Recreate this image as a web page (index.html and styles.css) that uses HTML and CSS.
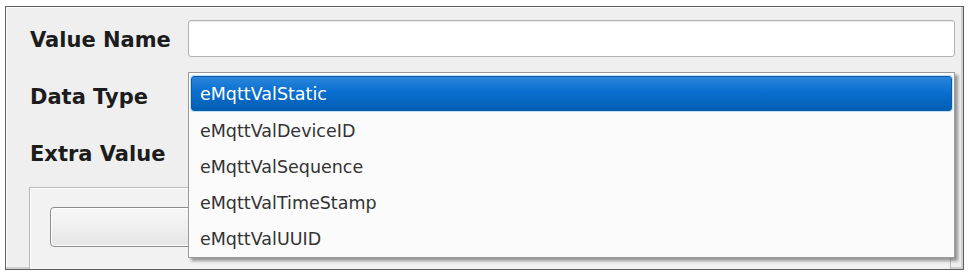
FILE: index.html
```html
<!DOCTYPE html>
<html>
<head>
<meta charset="utf-8">
<link rel="stylesheet" href="styles.css">
</head>
<body>
<div class="frame">
  <div class="row row-name">
    <div class="label">Value Name</div>
    <div class="input"></div>
  </div>
  <div class="row row-type">
    <div class="label">Data Type</div>
    <div class="combo"></div>
  </div>
  <div class="row row-extra">
    <div class="label">Extra Value</div>
  </div>
  <div class="group">
    <div class="button"></div>
  </div>
  <ul class="dropdown">
    <li class="item selected">eMqttValStatic</li>
    <li class="item">eMqttValDeviceID</li>
    <li class="item">eMqttValSequence</li>
    <li class="item">eMqttValTimeStamp</li>
    <li class="item">eMqttValUUID</li>
  </ul>
</div>
</body>
</html>
```
FILE: styles.css
```css
html, body {
  margin: 0;
  padding: 0;
  background: #ffffff;
}
body {
  width: 971px;
  height: 276px;
  overflow: hidden;
  font-family: "DejaVu Sans", "Liberation Sans", sans-serif;
}
.frame {
  position: relative;
  box-sizing: border-box;
  margin: 6px 0 0 5px;
  width: 959px;
  height: 264px;
  border: 1px solid #5e5e5e;
  box-shadow: inset -2px -2px 0 #cfcfcf, inset 1px 1px 0 #ffffff;
  background: #efefef;
  padding: 13px 8px 0 24px;
  overflow: hidden;
  display: flex;
  flex-direction: column;
}
.row {
  display: flex;
  align-items: center;
  height: 37px;
  flex: none;
}
.row-name .label { padding-top: 2px; }
.row-type { margin-top: 21px; }
.row-extra { margin-top: 20px; }
.label {
  width: 158px;
  flex: none;
  font-weight: bold;
  font-size: 21px;
  color: #1c1c1c;
  white-space: nowrap;
}
.input {
  flex: 1;
  height: 37px;
  box-sizing: border-box;
  background: #ffffff;
  border: 1px solid #b4b4b4;
  border-radius: 3px;
  box-shadow: inset 0 1px 1px rgba(0,0,0,0.08);
}
.combo {
  flex: 1;
  height: 37px;
  box-sizing: border-box;
  border: 1px solid #a0a0a0;
  border-radius: 3px;
  background: #f4f4f4;
}
.group {
  margin: 15px 4px 0 -1px;
  height: 120px;
  flex: none;
  box-sizing: border-box;
  border: 1px solid #b9b9b9;
  box-shadow: inset 1px 1px 0 #ffffff;
  background: #f2f2f2;
  padding: 19px 0 0 20px;
}
.button {
  width: 560px;
  height: 40px;
  box-sizing: border-box;
  border: 1px solid #8c8c8c;
  border-radius: 4px;
  background: linear-gradient(#f8f8f8, #e6e6e6);
  box-shadow: inset 0 0 0 1px #ffffff;
}
.dropdown {
  position: absolute;
  left: 182px;
  top: 65px;
  width: 767px;
  height: 186px;
  box-sizing: border-box;
  margin: 0;
  padding: 3px 2px 0 2px;
  list-style: none;
  background: #fbfbfb;
  border: 1px solid #9a9a9a;
  box-shadow: 3px 3px 3px rgba(0,0,0,0.38);
}
.item {
  height: 36px;
  box-sizing: border-box;
  padding: 2px 0 0 9px;
  line-height: 34px;
  font-size: 17.5px;
  color: #333333;
  white-space: nowrap;
}
.item.selected {
  height: 35px;
  color: #ffffff;
  border: 1px solid #0a5aa6;
  border-radius: 3px;
  padding: 1px 0 0 8px;
  line-height: 32px;
  background: linear-gradient(#2a86dc 0%, #0a6fcf 45%, #005fb3 100%);
  box-shadow: 0 0 0 1px #bfe0f8;
  margin-bottom: 1px;
}
```
